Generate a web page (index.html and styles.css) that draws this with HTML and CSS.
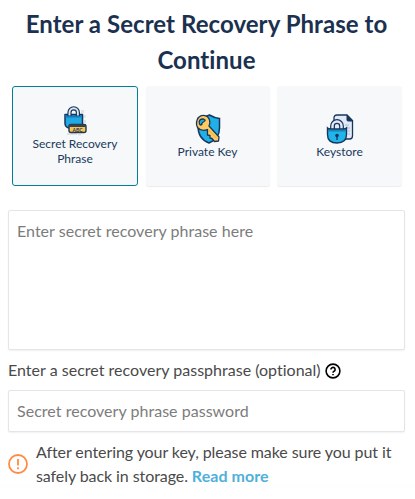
FILE: index.html
```html
<!DOCTYPE html>
<html lang="en">
<head>
<meta charset="utf-8">
<title>Secret Recovery Phrase</title>
<link rel="stylesheet" href="styles.css">
</head>
<body>
<main class="panel">
  <h1 class="title">Enter a Secret Recovery Phrase to Continue</h1>
  <div class="options">
    <button class="option option-active" type="button">
      <svg width="24" height="30" viewBox="0 0 24 30">
        <path d="M18 4h3v3h-3zM20.500 9h2v3h-2zM21 14h2v3h-2zM4 27h10v2H4zM15 28h3v1.500h-3z" fill="#dde3eb"/>
        <path d="M2 8.500h17.500v9q0 4.500-4 4.500H6q-4-1-4-4.500z" fill="#20a9e5" stroke="#18365a" stroke-width="1.500" stroke-linejoin="round"/>
        <path d="M2.500 9h16v2.500h-16z" fill="#137bb9"/>
        <path d="M6.500 10V6.500a4.200 4.200 0 0 1 8.400 0V10" fill="none" stroke="#18365a" stroke-width="4.200"/>
        <path d="M6.500 9.500V6.500a4.200 4.200 0 0 1 8.400 0v3" fill="none" stroke="#dce5f4" stroke-width="1.900"/>
        <rect x="6" y="18.500" width="17" height="8" rx="2" fill="#f8c453" stroke="#263849" stroke-width="1.400"/>
        <path d="M6 18.500h17v2.500H6z" fill="#344354"/>
        <text class="abc" x="14.600" y="25.500" text-anchor="middle">ABC</text>
      </svg>
      <span>Secret Recovery Phrase</span>
    </button>
    <button class="option" type="button">
      <svg width="30" height="30" viewBox="-1 0 30 30">
        <path d="M15.500 1q5 3 10 3.500v9.500q0 11-10.500 15Q4 25 4 12V4.500Q10 4 15.500 1z" fill="#20afe6" stroke="#18365a" stroke-width="1.500"/>
        <path d="M4.500 3.500C8 0 14 1 15.500 6q1 3-.5 6l10 11-.5 4-4 .5-2.500-3-2-.5v-2.500l-2.500-.5V15.500q-6 2.500-10-2Q1 8 4.500 3.500z" fill="#ffcb60" stroke="#18365a" stroke-width="1.300" stroke-linejoin="round"/>
        <path d="M5.500 10Q4 5 9.500 5q3 1 .500 2.500T8 10Q6.500 12 5.500 10z" fill="#20afe6" stroke="#18365a" stroke-width="1.300"/>
        <path d="M15 16l7.500 8.500" stroke="#e9ad43"/>
      </svg>
      <span>Private Key</span>
    </button>
    <button class="option" type="button">
      <svg width="30" height="30" viewBox="-1 0 30 30">
        <path d="M11 1h10l5.500 5.500V22q0 3-3 3H8V4q0-3 3-3z" fill="#e2eaf9" stroke="#18365a" stroke-width="1.300"/>
        <path d="M21 1l5.500 6h-4.500q-1 0-1-1z" fill="#18365a" stroke="#18365a"/>
        <path d="M19 11h4M21 14h3M22 17h2M22 20h2" stroke="#aebdd3"/>
        <path d="M6.500 15v-3a4.500 4.500 0 0 1 9 0v3" fill="none" stroke="#18365a" stroke-width="4.800"/>
        <path d="M6.500 15v-3a4.500 4.500 0 0 1 9 0v3" fill="none" stroke="#e2eaf9" stroke-width="2.400"/>
        <path d="M1.500 14q1 1 3 1h13q2 0 3-1v6.500q0 8.500-9.500 8.500T1.500 20.500z" fill="#20b4ea" stroke="#18365a" stroke-width="1.400"/>
        <path d="M2 16.800h18" fill="none" stroke="#1685b7" stroke-width="1.500"/>
        <circle cx="11" cy="21.500" r="1.800" fill="#18365a"/>
        <path d="M11 22v4" stroke="#18365a" stroke-width="1.300"/>
      </svg>
      <span>Keystore</span>
    </button>
  </div>
  <textarea class="field phrase" placeholder="Enter secret recovery phrase here"></textarea>
  <label class="label" for="pass">Enter a secret recovery passphrase (optional)
    <svg width="16" height="16" viewBox="0 0 16 16" fill="none" stroke="#000" stroke-width="1.600">
      <circle cx="8" cy="8" r="6.900"/>
      <path d="M5.900 6.600a2.100 2.100 0 1 1 3.500 1.500Q8 8.700 8 9.700M8 10.900v1.400"/>
    </svg>
  </label>
  <input class="field pass" id="pass" type="text" placeholder="Secret recovery phrase password">
  <div class="notice">
    <svg width="20" height="20" viewBox="0 0 20 20" fill="none" stroke="#ff8c45" stroke-width="1.800">
      <circle cx="10" cy="10" r="9"/>
      <path d="M10 5v6.500M10 13.200v2"/>
    </svg>
    <p>After entering your key, please make sure you put it safely back in storage. <a class="more">Read more</a></p>
  </div>
</main>
</body>
</html>
```
FILE: styles.css
```css
* { box-sizing: border-box; }
body {
  margin: 0;
  background: linear-gradient(#fff 484px, #fafafa 499px);
  color: #4a4a4a;
  font: 16px/24px Lato, sans-serif;
  font-variant-ligatures: none;
}
.panel { padding: 6px 10px 0 8px; }
.title {
  margin: 0 0 8px;
  color: #1b314f;
  font-size: 24px;
  line-height: 36px;
  font-weight: 700;
  letter-spacing: 0.060px;
  text-align: center;
}
.options {
  display: grid;
  grid-template-columns: 126px 124px 125px;
  gap: 7.500px;
  margin: 0 0 24px 4px;
}
.option {
  display: flex;
  flex-direction: column;
  align-items: center;
  justify-content: center;
  height: 100px;
  padding: 0 14px;
  border: 1px solid transparent;
  border-radius: 3px;
  background: #f6f8fa;
  box-shadow: 0 1px 1px #e9ecef;
  color: #213a5b;
  font: 12px/15px Lato, sans-serif;
  font-variant-ligatures: none;
}
.option-active { border-color: #007f98; box-shadow: none; }
.abc { font: 700 5px Lato, sans-serif; fill: #18365a; }
.field {
  display: block;
  width: 397px;
  margin: 0;
  border: 1px solid #e4e5e9;
  border-radius: 2px;
  background: #fff;
  box-shadow: 0 1px 2px #f0f1f3;
  font: 16px/24px Lato, sans-serif;
  letter-spacing: 0.030px;
}
.field::placeholder { color: #7c7c7c; opacity: 1; }
.phrase { height: 140px; padding: 8px; resize: none; }
.label { display: flex; align-items: center; gap: 4px; margin: 8px 0; letter-spacing: 0.015px; white-space: nowrap; }
.label svg { margin-top: 2px; }
.pass { height: 42px; padding: 0 8px 2px; }
.notice { display: flex; align-items: center; gap: 8px; margin-top: 8px; }
.notice svg { flex: none; }
.notice p { margin: 0; letter-spacing: -0.080px; }
.more { color: #4fb0da; font-weight: 700; letter-spacing: 0.050px; }
```
